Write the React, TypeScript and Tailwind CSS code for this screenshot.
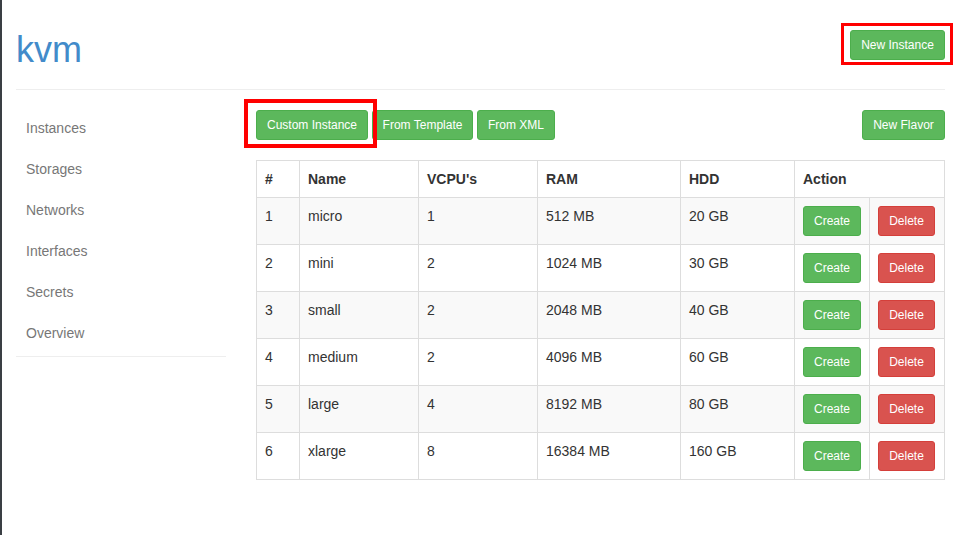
import React from "react";

const rows = [
  ["1", "micro", "1", "512 MB", "20 GB"],
  ["2", "mini", "2", "1024 MB", "30 GB"],
  ["3", "small", "2", "2048 MB", "40 GB"],
  ["4", "medium", "2", "4096 MB", "60 GB"],
  ["5", "large", "4", "8192 MB", "80 GB"],
  ["6", "xlarge", "8", "16384 MB", "160 GB"],
];

const nav = ["Instances", "Storages", "Networks", "Interfaces", "Secrets", "Overview"];

function Btn({ children, red, w }: { children: React.ReactNode; red?: boolean; w: string }) {
  return (
    <button
      className={
        (red
          ? "bg-[#d9534f] border-[#d43f3a] "
          : "bg-[#5cb85c] border-[#4cae4c] ") +
        w +
        " block h-[30px] p-0 text-center text-[12px] leading-[18px] text-white border rounded-[3px] whitespace-nowrap"
      }
    >
      {children}
    </button>
  );
}

export default function App() {
  return (
    <div className="flex min-h-[535px] bg-white font-['Liberation_Sans',Arial,sans-serif] text-[14px] text-[#333]">
      <div className="w-[2px] shrink-0 bg-[#3a3f44]" />
      <div className="flex-1 pl-[14px] pr-[12px]">
        <div className="h-[90px] pt-[30px] border-b border-[#eee] flex justify-between items-start">
          <h1 className="text-[36px] leading-[1.1] text-[#428bca] font-normal">kvm</h1>
          <div className="relative">
            <Btn w="w-[95px]">New Instance</Btn>
            <span className="absolute left-[-9px] top-[-7px] w-[112px] h-[42px] border-[3px] border-[#ff0000] pointer-events-none" />
          </div>
        </div>
        <div className="flex">
          <div className="w-[210px] shrink-0 mt-[18px]">
            <ul className="pb-[2px] border-b border-[#eee]">
              {nav.map((n) => (
                <li key={n} className="h-[41px] leading-[41px] px-[10px] text-[#777]">
                  {n}
                </li>
              ))}
            </ul>
          </div>
          <div className="flex-1 ml-[30px] pt-[20px]">
            <div className="flex justify-between mb-[20px]">
              <div className="flex gap-[4px]">
                <div className="relative">
                  <Btn w="w-[112px]">Custom Instance</Btn>
                  <span className="absolute left-[-12px] top-[-11px] w-[133px] h-[49px] border-[4px] border-[#ff0000] pointer-events-none" />
                </div>
                <Btn w="w-[101px]">From Template</Btn>
                <Btn w="w-[78px]">From XML</Btn>
              </div>
              <Btn w="w-[83px]">New Flavor</Btn>
            </div>
            <table className="w-full table-fixed border-collapse border border-[#ddd]">
              <colgroup>
                <col className="w-[43px]" />
                <col className="w-[119px]" />
                <col className="w-[119px]" />
                <col className="w-[143px]" />
                <col className="w-[114px]" />
                <col className="w-[75px]" />
                <col className="w-[75px]" />
              </colgroup>
              <thead>
                <tr>
                  {["#", "Name", "VCPU's", "RAM", "HDD"].map((h) => (
                    <th key={h} className="border border-[#ddd] p-[8px] leading-[20px] text-left font-bold align-bottom">
                      {h}
                    </th>
                  ))}
                  <th colSpan={2} className="border border-[#ddd] p-[8px] leading-[20px] text-left font-bold align-bottom">
                    Action
                  </th>
                </tr>
              </thead>
              <tbody>
                {rows.map((r, i) => (
                  <tr key={r[0]} className={i % 2 === 0 ? "bg-[#f9f9f9]" : "bg-white"}>
                    {r.map((c, j) => (
                      <td key={j} className="border border-[#ddd] p-[8px] leading-[20px] align-top">
                        {c}
                      </td>
                    ))}
                    <td className="border border-[#ddd] p-[8px] leading-[20px] align-top">
                      <Btn w="w-[58px]">Create</Btn>
                    </td>
                    <td className="border border-[#ddd] p-[8px] leading-[20px] align-top">
                      <Btn red w="w-[57px]">Delete</Btn>
                    </td>
                  </tr>
                ))}
              </tbody>
            </table>
          </div>
        </div>
      </div>
    </div>
  );
}
